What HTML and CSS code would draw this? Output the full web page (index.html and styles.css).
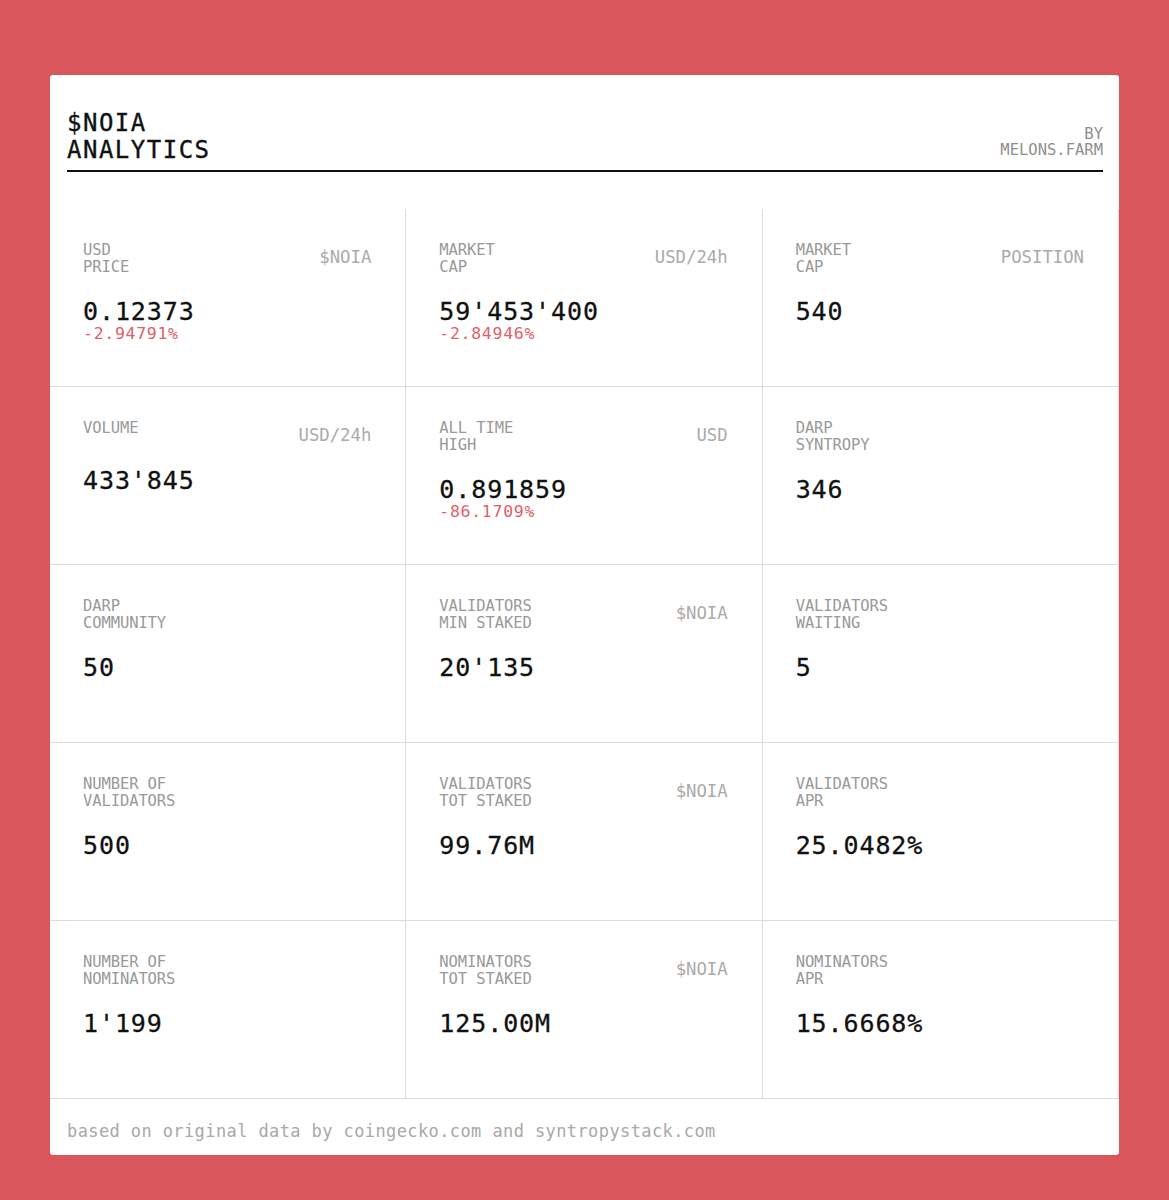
FILE: index.html
```html
<!DOCTYPE html>
<html lang="en">
<head>
<meta charset="utf-8">
<title>$NOIA Analytics</title>
<link rel="stylesheet" href="styles.css">
</head>
<body>
<main class="card">
  <header class="head">
    <h1 class="title">$NOIA<br>ANALYTICS</h1>
    <div class="by">BY<br>MELONS.FARM</div>
  </header>
  <section class="grid">
    <div class="cell">
      <div class="top"><div class="label">USD<br>PRICE</div><div class="unit">$NOIA</div></div>
      <div class="value">0.12373</div>
      <div class="delta">-2.94791%</div>
    </div>
    <div class="cell">
      <div class="top"><div class="label">MARKET<br>CAP</div><div class="unit">USD/24h</div></div>
      <div class="value">59'453'400</div>
      <div class="delta">-2.84946%</div>
    </div>
    <div class="cell">
      <div class="top"><div class="label">MARKET<br>CAP</div><div class="unit">POSITION</div></div>
      <div class="value">540</div>
    </div>

    <div class="cell">
      <div class="top"><div class="label">VOLUME</div><div class="unit">USD/24h</div></div>
      <div class="value">433'845</div>
    </div>
    <div class="cell">
      <div class="top"><div class="label">ALL TIME<br>HIGH</div><div class="unit">USD</div></div>
      <div class="value">0.891859</div>
      <div class="delta">-86.1709%</div>
    </div>
    <div class="cell">
      <div class="top"><div class="label">DARP<br>SYNTROPY</div></div>
      <div class="value">346</div>
    </div>

    <div class="cell">
      <div class="top"><div class="label">DARP<br>COMMUNITY</div></div>
      <div class="value">50</div>
    </div>
    <div class="cell">
      <div class="top"><div class="label">VALIDATORS<br>MIN STAKED</div><div class="unit">$NOIA</div></div>
      <div class="value">20'135</div>
    </div>
    <div class="cell">
      <div class="top"><div class="label">VALIDATORS<br>WAITING</div></div>
      <div class="value">5</div>
    </div>

    <div class="cell">
      <div class="top"><div class="label">NUMBER OF<br>VALIDATORS</div></div>
      <div class="value">500</div>
    </div>
    <div class="cell">
      <div class="top"><div class="label">VALIDATORS<br>TOT STAKED</div><div class="unit">$NOIA</div></div>
      <div class="value">99.76M</div>
    </div>
    <div class="cell">
      <div class="top"><div class="label">VALIDATORS<br>APR</div></div>
      <div class="value">25.0482%</div>
    </div>

    <div class="cell">
      <div class="top"><div class="label">NUMBER OF<br>NOMINATORS</div></div>
      <div class="value">1'199</div>
    </div>
    <div class="cell">
      <div class="top"><div class="label">NOMINATORS<br>TOT STAKED</div><div class="unit">$NOIA</div></div>
      <div class="value">125.00M</div>
    </div>
    <div class="cell">
      <div class="top"><div class="label">NOMINATORS<br>APR</div></div>
      <div class="value">15.6668%</div>
    </div>
  </section>
  <footer class="foot">based on original data by coingecko.com and syntropystack.com</footer>
</main>
</body>
</html>
```

FILE: styles.css
```css
* { box-sizing: border-box; }
html, body { margin: 0; padding: 0; }
body {
  background: #d9565c;
  padding: 75px 50px 45px;
  font-family: "DejaVu Sans Mono", "Liberation Mono", monospace;
  color: #111;
}
.card {
  width: 1069px;
  background: #fff;
  border-radius: 3px;
  overflow: hidden;
}
.head {
  margin: 0 16px 0 17px;
  padding-top: 35px;
  padding-bottom: 6px;
  border-bottom: 2px solid #111;
  display: flex;
  justify-content: space-between;
  align-items: flex-end;
}
.title {
  margin: 0;
  font-size: 24px;
  line-height: 27px;
  font-weight: normal;
  letter-spacing: 1.5px;
  color: #111;
  -webkit-text-stroke: 0.35px #111;
}
.by {
  font-size: 15.5px;
  line-height: 16px;
  text-align: right;
  color: #8f8f8f;
  padding-bottom: 6px;
}
.grid {
  margin-top: 37px;
  display: grid;
  grid-template-columns: repeat(3, 1fr);
}
.cell {
  height: 178px;
  padding: 33px 34px 0 33px;
  border-right: 1px solid #dcdcdc;
  border-bottom: 1px solid #dcdcdc;
}
.top {
  display: flex;
  justify-content: space-between;
  align-items: flex-start;
}
.label {
  font-size: 15.5px;
  line-height: 17px;
  color: #999;
  letter-spacing: -0.1px;
}
.unit {
  margin-top: 4.7px;
  font-size: 17.3px;
  line-height: 20px;
  color: #aaa;
}
.value {
  margin-top: 23px;
  font-size: 25px;
  line-height: 26px;
  letter-spacing: 0.9px;
  color: #111;
  -webkit-text-stroke: 0.3px #111;
}
.delta {
  font-size: 16.5px;
  line-height: 18px;
  letter-spacing: 0.7px;
  color: #e0606a;
}
.foot {
  padding: 22px 17px 14px;
  font-size: 17px;
  line-height: 20px;
  letter-spacing: 0.4px;
  color: #a8a8a8;
}
```
